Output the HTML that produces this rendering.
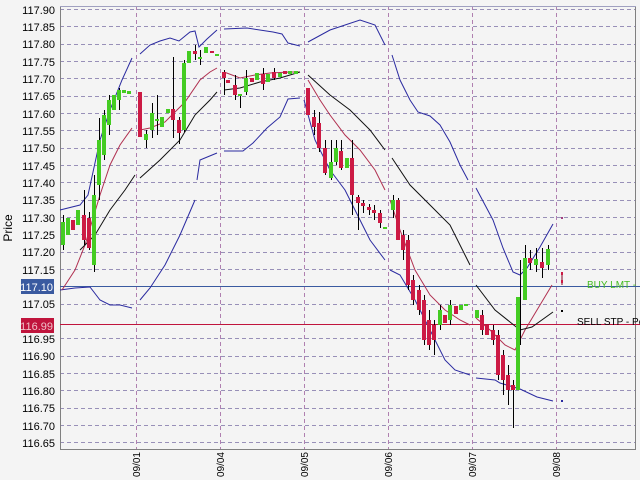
<!DOCTYPE html>
<html><head><meta charset="utf-8"><style>
html,body{margin:0;padding:0;background:#f4f4f4;}
svg{display:block;font-family:"Liberation Sans",sans-serif;}
</style></head><body>
<svg width="640" height="480" viewBox="0 0 640 480" xmlns="http://www.w3.org/2000/svg">
<rect width="640" height="480" fill="#f4f4f4"/>
<g stroke="#9890b8" stroke-width="1" stroke-dasharray="4,3" fill="none">
<path d="M60 9.5H636M60 26.5H636M60 44.5H636M60 61.5H636M60 78.5H636M60 96.5H636M60 113.5H636M60 130.5H636M60 148.5H636M60 165.5H636M60 182.5H636M60 200.5H636M60 217.5H636M60 234.5H636M60 252.5H636M60 269.5H636M60 304.5H636M60 338.5H636M60 356.5H636M60 373.5H636M60 390.5H636M60 408.5H636M60 425.5H636M60 442.5H636"/>
</g>
<g stroke="#b080b0" stroke-width="1" stroke-dasharray="4,3">
<path d="M136.5 6V449M220.5 6V449M304.5 6V449M388.5 6V449M472.5 6V449M556.5 6V449"/>
</g>
<path d="M60.5 6V449.5H635.5V6" stroke="#808080" fill="none"/>
<path d="M60 6.5H636" stroke="#a0a0c0"/>
<path d="M60 286.5H640" stroke="#3a5aa0"/>
<path d="M60 324.5H640" stroke="#c0143c"/>
<g stroke="#2a2aa0" fill="none" stroke-width="1">
<polyline points="60,210 80,205 88,195 100,140 110,110 122,80 132,58"/>
<polyline points="140,54 150,45 160,41 170,38 179,41 190,32 195,31 199,47 207,39 217,30"/>
<polyline points="224,29 247,28 273,32 282,34 288,43 300,46"/>
<polyline points="308,42 330,30 360,20 375,25 385,45"/>
<polyline points="392,55 400,80 410,100 418,112 430,116 440,125 450,142 460,165 468,180"/>
<polyline points="476,188 493,220 503,248 513,272 520,275 527,268 540,247 553,224"/>
<polyline points="60,290 75,288 90,287 100,300 110,305 120,305 132,308"/>
<polyline points="140,300 150,288 165,265 180,235 195,200"/>
<polyline points="197,180 200,160 217,153"/>
<polyline points="224,151 243,151 253,143 267,128 280,117 288,99 300,98"/>
<polyline points="304,100 315,140 330,170 345,190 360,220 370,240 385,260"/>
<polyline points="390,270 400,275 415,300 430,330 445,360 455,370 470,375"/>
<polyline points="476,378 495,380 500,383 520,389 537,397 553,401"/>
</g>
<g stroke="#b03050" fill="none">
<polyline points="62,290 75,270 85,245 100,195 110,165 120,145 132,128"/>
<polyline points="140,130 150,128 165,122 175,112 185,102 200,80 210,72 217,68"/>
<polyline points="224,72 240,78 255,75 270,73 290,72 300,72"/>
<polyline points="308,80 320,100 330,115 345,135 360,150 375,170 385,190"/>
<polyline points="390,200 400,230 415,270 430,295 445,310 460,320 470,325"/>
<polyline points="476,318 490,330 505,345 515,350 525,330 540,305 552,285"/>
</g>
<g stroke="#101010" fill="none">
<polyline points="80,250 95,235 110,210 125,190 135,175"/>
<polyline points="140,178 160,160 180,140 195,115 210,100 217,92"/>
<polyline points="224,90 240,88 260,82 280,78 300,72"/>
<polyline points="308,75 330,95 350,110 370,130 385,150"/>
<polyline points="392,158 410,185 430,205 450,225 465,255 470,265"/>
<polyline points="476,285 495,310 510,322 520,330 532,327 553,312"/>
</g>
<g stroke="#000" stroke-width="1">
<path d="M63.5 215V250M84.5 190V245M89.5 212V250M94.5 175V272M99.5 118V200M104.5 110V160M109.5 95V135M119.5 88V110M146.5 130V148M152.5 103V138M157.5 95V135M173.5 57V138M179.5 117V144M184.5 60V132M195.5 45V60M200.5 50V65M224.5 70V95M235.5 75V100M240.5 95V108M246.5 70V95M263.5 68V90M274.5 68V80M314.5 110V135M319.5 112V152M325.5 140V175M331.5 140V180M336.5 140V165M341.5 140V170M352.5 140V215M358.5 195V230M363.5 200V213M369.5 204V215M374.5 205V220M380.5 210V228M393.5 195V218M398.5 198V240M403.5 230V260M408.5 235V290M413.5 275V305M419.5 285V315M424.5 295V345M429.5 310V350M434.5 320V355M440.5 305V330M450.5 300V325M482.5 310V335M493.5 325V345M498.5 330V380M503.5 350V395M508.5 365V405M513.5 380V428M520.5 260V345M525.5 245V300M530.5 250V270M536.5 248V272M542.5 248V278M548.5 245V270"/>
</g>
<g fill="#44cc22">
<rect x="61" y="222" width="4" height="23"/><rect x="66" y="218" width="4" height="17"/><rect x="76" y="210" width="4" height="15"/>
<rect x="92" y="195" width="4" height="70"/><rect x="97" y="140" width="4" height="45"/><rect x="102" y="115" width="4" height="40"/>
<rect x="107" y="100" width="4" height="25"/><rect x="112" y="95" width="4" height="15"/><rect x="117" y="90" width="4" height="10"/>
<rect x="122" y="90" width="4" height="3"/><rect x="127" y="91" width="4" height="3"/>
<rect x="144" y="134" width="4" height="6"/><rect x="150" y="113" width="4" height="17"/><rect x="155" y="119" width="4" height="2"/>
<rect x="160" y="117" width="4" height="10"/><rect x="166" y="109" width="4" height="4"/><rect x="182" y="63" width="4" height="67"/>
<rect x="187" y="51" width="4" height="12"/><rect x="198" y="57" width="4" height="2"/><rect x="204" y="47" width="4" height="6"/><rect x="215" y="54" width="4" height="2"/>
<rect x="238" y="94" width="4" height="2"/><rect x="244" y="78" width="4" height="14"/><rect x="255" y="73" width="4" height="7"/>
<rect x="266" y="74" width="4" height="8"/><rect x="278" y="73" width="4" height="4"/><rect x="288" y="71" width="4" height="3"/><rect x="294" y="71" width="4" height="3"/>
<rect x="329" y="162" width="4" height="16"/><rect x="334" y="148" width="4" height="14"/><rect x="345" y="158" width="4" height="10"/><rect x="383" y="227" width="4" height="2"/>
<rect x="391" y="200" width="4" height="10"/><rect x="438" y="310" width="4" height="15"/><rect x="448" y="305" width="4" height="15"/><rect x="459" y="305" width="4" height="5"/><rect x="464" y="304" width="4" height="2"/><rect x="475" y="310" width="4" height="8"/>
<rect x="516" y="297" width="4" height="93"/><rect x="523" y="258" width="4" height="42"/><rect x="534" y="259" width="4" height="6"/><rect x="546" y="249" width="4" height="16"/>
</g>
<g fill="#cc1a44">
<rect x="71" y="220" width="4" height="10"/><rect x="82" y="215" width="4" height="25"/><rect x="87" y="218" width="4" height="30"/>
<rect x="138" y="92" width="4" height="45"/><rect x="171" y="109" width="4" height="11"/><rect x="177" y="120" width="4" height="13"/>
<rect x="193" y="51" width="4" height="3"/><rect x="210" y="51" width="4" height="2"/>
<rect x="222" y="72" width="4" height="6"/><rect x="226" y="80" width="4" height="3"/><rect x="233" y="85" width="4" height="10"/><rect x="250" y="78" width="4" height="4"/>
<rect x="261" y="74" width="4" height="10"/><rect x="272" y="72" width="4" height="6"/><rect x="283" y="71" width="4" height="3"/>
<rect x="306" y="88" width="4" height="27"/><rect x="312" y="117" width="4" height="10"/><rect x="317" y="123" width="4" height="25"/><rect x="323" y="148" width="4" height="25"/>
<rect x="339" y="151" width="4" height="17"/><rect x="350" y="158" width="4" height="37"/><rect x="356" y="197" width="4" height="6"/><rect x="361" y="203" width="4" height="3"/>
<rect x="367" y="207" width="4" height="3"/><rect x="372" y="210" width="4" height="3"/><rect x="378" y="213" width="4" height="10"/>
<rect x="396" y="200" width="4" height="40"/><rect x="401" y="235" width="4" height="15"/><rect x="406" y="240" width="4" height="45"/><rect x="411" y="280" width="4" height="20"/>
<rect x="417" y="290" width="4" height="20"/><rect x="422" y="300" width="4" height="40"/><rect x="427" y="320" width="4" height="25"/><rect x="432" y="325" width="4" height="15"/><rect x="443" y="315" width="4" height="8"/><rect x="454" y="306" width="4" height="8"/>
<rect x="480" y="315" width="4" height="15"/><rect x="485" y="325" width="4" height="10"/><rect x="491" y="330" width="4" height="10"/><rect x="496" y="335" width="4" height="40"/>
<rect x="501" y="355" width="4" height="25"/><rect x="506" y="375" width="4" height="15"/><rect x="511" y="385" width="4" height="5"/><rect x="528" y="258" width="4" height="5"/><rect x="540" y="262" width="4" height="6"/>
</g>
<rect x="561" y="217" width="2" height="2" fill="#a04080"/>
<path d="M562 273V285" stroke="#800020"/><rect x="561" y="272" width="2" height="3" fill="#cc1a44"/><rect x="561" y="280" width="2" height="3" fill="#cc1a44"/>
<rect x="561" y="310" width="2" height="2" fill="#000"/>
<rect x="561" y="400" width="2" height="2" fill="#2a2aa0"/>
<text x="587" y="288" font-size="10" fill="#44bb22">BUY LMT -</text>
<text x="577" y="325" font-size="10" fill="#000">SELL STP - Pe</text>
<g font-size="11" fill="#000" text-anchor="end">
<text x="55" y="14">117.90</text><text x="55" y="31">117.85</text><text x="55" y="48">117.80</text><text x="55" y="66">117.75</text>
<text x="55" y="83">117.70</text><text x="55" y="100">117.65</text><text x="55" y="118">117.60</text><text x="55" y="135">117.55</text>
<text x="55" y="152">117.50</text><text x="55" y="170">117.45</text><text x="55" y="187">117.40</text><text x="55" y="204">117.35</text>
<text x="55" y="222">117.30</text><text x="55" y="239">117.25</text><text x="55" y="256">117.20</text><text x="55" y="274">117.15</text>
<text x="55" y="308">117.05</text><text x="55" y="343">116.95</text><text x="55" y="360">116.90</text><text x="55" y="378">116.85</text>
<text x="55" y="395">116.80</text><text x="55" y="412">116.75</text><text x="55" y="430">116.70</text><text x="55" y="447">116.65</text>
</g>
<rect x="21" y="279" width="33" height="15" fill="#3a5aa0"/>
<text x="53" y="291" font-size="11" fill="#fff" text-anchor="end">117.10</text>
<rect x="21" y="318" width="33" height="15" fill="#c0143c"/>
<text x="53" y="330" font-size="11" fill="#f0c0c8" text-anchor="end">116.99</text>
<text transform="translate(12,228) rotate(-90)" font-size="12" fill="#000" text-anchor="middle">Price</text>
<g font-size="10" fill="#000" text-anchor="end">
<text transform="translate(140,452) rotate(-90)">09/01</text>
<text transform="translate(224,452) rotate(-90)">09/04</text>
<text transform="translate(308,452) rotate(-90)">09/05</text>
<text transform="translate(392,452) rotate(-90)">09/06</text>
<text transform="translate(476,452) rotate(-90)">09/07</text>
<text transform="translate(560,452) rotate(-90)">09/08</text>
</g>
</svg>
</body></html>
